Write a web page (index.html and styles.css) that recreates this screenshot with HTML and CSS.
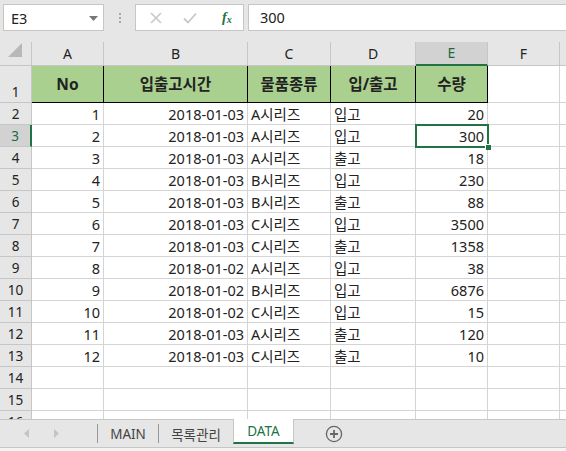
FILE: index.html
```html
<!DOCTYPE html>
<html lang="ko">
<head>
  <meta charset="UTF-8" />
  <title>DATA - Excel</title>
  <link rel="stylesheet" href="styles.css">
</head>
<body>
<div class="app">
  <div class="toolbar">
    <div class="namebox">
      <span>E3</span>
      <svg class="caret" width="9" height="5" viewBox="0 0 9 5"><path d="M0 0h9L4.5 5z" fill="#777"/></svg>
    </div>
    <div class="grip"><i></i><i></i><i></i></div>
    <div class="fxbox">
      <svg width="14" height="14" viewBox="0 0 14 14"><path d="M2 2l10 10M12 2L2 12" stroke="#c8c8c8" stroke-width="1.6"/></svg>
      <svg width="16" height="14" viewBox="0 0 16 14"><path d="M2 7.5l4 4 8-9" stroke="#c8c8c8" stroke-width="1.8" fill="none"/></svg>
      <span class="fx">f<sub>x</sub></span>
    </div>
    <div class="formula">300</div>
  </div>

  <div class="sheet">
    <table class="grid">
      <colgroup>
        <col class="c-rh"><col class="c-a"><col class="c-b"><col class="c-c"><col class="c-d"><col class="c-e"><col class="c-f"><col class="c-g">
      </colgroup>
      <tr class="colhead">
        <th class="corner"><svg width="16" height="16" viewBox="0 0 16 16"><path d="M15 1V15H1z" fill="#b8b8b8"/></svg></th>
        <th>A</th><th>B</th><th>C</th><th>D</th><th class="cur">E</th><th>F</th><th></th>
      </tr>
      <tr class="r1">
        <th>1</th>
        <td class="hd">No</td><td class="hd">입출고시간</td><td class="hd">물품종류</td><td class="hd">입/출고</td><td class="hd">수량</td><td></td><td></td>
      </tr>
      <tr><th>2</th><td class="n">1</td><td class="n">2018-01-03</td><td>A시리즈</td><td>입고</td><td class="n">20</td><td></td><td></td></tr>
      <tr><th class="cur">3</th><td class="n">2</td><td class="n">2018-01-03</td><td>A시리즈</td><td>입고</td><td class="n sel">300</td><td></td><td></td></tr>
      <tr><th>4</th><td class="n">3</td><td class="n">2018-01-03</td><td>A시리즈</td><td>출고</td><td class="n">18</td><td></td><td></td></tr>
      <tr><th>5</th><td class="n">4</td><td class="n">2018-01-03</td><td>B시리즈</td><td>입고</td><td class="n">230</td><td></td><td></td></tr>
      <tr><th>6</th><td class="n">5</td><td class="n">2018-01-03</td><td>B시리즈</td><td>출고</td><td class="n">88</td><td></td><td></td></tr>
      <tr><th>7</th><td class="n">6</td><td class="n">2018-01-03</td><td>C시리즈</td><td>입고</td><td class="n">3500</td><td></td><td></td></tr>
      <tr><th>8</th><td class="n">7</td><td class="n">2018-01-03</td><td>C시리즈</td><td>출고</td><td class="n">1358</td><td></td><td></td></tr>
      <tr><th>9</th><td class="n">8</td><td class="n">2018-01-02</td><td>A시리즈</td><td>입고</td><td class="n">38</td><td></td><td></td></tr>
      <tr><th>10</th><td class="n">9</td><td class="n">2018-01-02</td><td>B시리즈</td><td>입고</td><td class="n">6876</td><td></td><td></td></tr>
      <tr><th>11</th><td class="n">10</td><td class="n">2018-01-02</td><td>C시리즈</td><td>입고</td><td class="n">15</td><td></td><td></td></tr>
      <tr><th>12</th><td class="n">11</td><td class="n">2018-01-03</td><td>A시리즈</td><td>출고</td><td class="n">120</td><td></td><td></td></tr>
      <tr><th>13</th><td class="n">12</td><td class="n">2018-01-03</td><td>C시리즈</td><td>출고</td><td class="n">10</td><td></td><td></td></tr>
      <tr><th>14</th><td></td><td></td><td></td><td></td><td></td><td></td><td></td></tr>
      <tr><th>15</th><td></td><td></td><td></td><td></td><td></td><td></td><td></td></tr>
      <tr><th>16</th><td></td><td></td><td></td><td></td><td></td><td></td><td></td></tr>
    </table>
  </div>

  <div class="tabs">
    <div class="nav">
      <svg width="6" height="9" viewBox="0 0 6 9"><path d="M5 0v9L0 4.5z" fill="#c4c4c4"/></svg>
      <svg width="6" height="9" viewBox="0 0 6 9"><path d="M1 0v9l5-4.5z" fill="#c4c4c4"/></svg>
    </div>
    <div class="tab">MAIN</div>
    <div class="tab">목록관리</div>
    <div class="tab active">DATA</div>
    <div class="add">
      <svg width="18" height="18" viewBox="0 0 18 18"><circle cx="9" cy="9" r="7.6" fill="none" stroke="#666" stroke-width="1.3"/><path d="M9 5v8M5 9h8" stroke="#666" stroke-width="1.8"/></svg>
    </div>
  </div>
  <div class="status"></div>
</div>
</body>
</html>
```

FILE: styles.css
```css
body { margin: 0; background: #e6e6e6; font-family: "Noto Sans", "Noto Sans CJK KR", sans-serif; color: #222; }
.app { width: 566px; height: 451px; overflow: hidden; display: flex; flex-direction: column; }

/* formula bar */
.toolbar { height: 42px; box-sizing: border-box; padding-top: 4px; display: flex; align-items: flex-start; background: #e6e6e6; }
.namebox { width: 101px; height: 27px; box-sizing: border-box; margin-left: 3px; background: #fff; border: 1px solid #c6c6c6; display: flex; align-items: center; justify-content: space-between; padding: 0 5px 0 7px; font-size: 14.5px; }
.namebox .caret { margin-top: 1px; }
.grip { width: 31px; height: 27px; display: flex; flex-direction: column; align-items: center; justify-content: center; gap: 2px; }
.grip i { width: 2px; height: 2px; background: #a8a8a8; }
.fxbox { width: 109px; height: 27px; box-sizing: border-box; background: #fff; border: 1px solid #c6c6c6; display: flex; align-items: center; padding-left: 13px; gap: 19px; }
.fxbox .fx { font-family: "Liberation Serif", serif; font-style: italic; font-weight: bold; color: #217346; font-size: 14px; margin-left: 5px; }
.fxbox .fx sub { font-size: 10px; vertical-align: -1px; }
.formula { flex: 1; height: 27px; box-sizing: border-box; margin-left: 4px; background: #fff; border: 1px solid #c6c6c6; border-right: none; padding-left: 11px; font-size: 14.5px; line-height: 25px; }

/* grid */
.sheet { height: 377px; overflow: hidden; background: #fff; }
.grid { table-layout: fixed; width: 632px; border-collapse: separate; border-spacing: 0; font-size: 14.5px; }
.c-rh { width: 32px; }
.c-a { width: 72px; }
.c-b { width: 144px; }
.c-c { width: 83px; }
.c-d { width: 85px; }
.c-e { width: 72px; }
.c-f { width: 72px; }
.c-g { width: 72px; }
.grid td, .grid th { padding: 0 3px; border-right: 1px solid #d4d4d4; border-bottom: 1px solid #d4d4d4; white-space: nowrap; overflow: hidden; box-sizing: border-box; }
.grid tr { height: 22px; }
.grid td { vertical-align: bottom; line-height: 20px; }
.grid td.n { text-align: right; }
.grid th { background: #e6e6e6; font-weight: normal; color: #222; border-color: #c6c6c6; }
.colhead { height: 21px !important; }
.colhead th { text-align: center; font-size: 14px; line-height: 20px; }
.colhead th.corner { padding: 0; text-align: right; vertical-align: bottom; line-height: 0; }
.colhead th.corner svg { margin: 0 2px 2px 0; }
.grid tr > th:first-child { text-align: center; font-size: 13.5px; vertical-align: bottom; line-height: 20px; padding: 0; }
.grid th.cur { background: #d2d2d2; color: #1e6b40; }
.colhead th.cur { border-bottom: 2px solid #217346; }
.grid tr > th.cur:first-child { border-right: 2px solid #217346; }

.r1 { height: 37px !important; }
.r1 th { line-height: 22px; }
.r1 td.hd { background: #a9d08e; border-right: 1px solid #000; border-bottom: 1px solid #000; text-align: center; vertical-align: middle; font-weight: bold; font-size: 15.5px; }
.r1 td:last-child, .r1 td:nth-last-child(2) { vertical-align: middle; }

.grid td.sel { position: relative; outline: 2px solid #217346; outline-offset: -1px; overflow: visible; }
.grid td.sel::after { content: ""; position: absolute; right: -4px; bottom: -4px; width: 5px; height: 5px; background: #217346; border: 1px solid #fff; border-right: none; border-bottom: none; z-index: 2; }

/* sheet tabs */
.tabs { height: 28px; box-sizing: border-box; border-top: 1px solid #c6c6c6; background: #e6e6e6; display: flex; align-items: stretch; }
.nav { width: 98px; display: flex; align-items: center; gap: 23px; padding-left: 24px; box-sizing: border-box; border-right: 1px solid #999; margin: 4px 0 4px; }
.tab { padding: 0 12px 0 12px; font-size: 13.5px; color: #444; display: flex; align-items: center; border-right: 1px solid #999; margin: 4px 0; }
.tab:nth-child(2) { width: 60px; justify-content: center; padding: 0; }
.tab:nth-child(3) { width: 74px; justify-content: center; padding: 0; border-right: none; }
.tab.active { width: 61px; margin: -1px 0 3px; padding: 0; justify-content: center; background: #fff; color: #217346; border: 1px solid #c6c6c6; border-top: none; border-bottom: 2px solid #217346; box-sizing: border-box; }
.add { display: flex; align-items: center; margin-left: 31px; }
.status { flex: 1; border-top: 1px solid #c6c6c6; background: #f3f3f3; }
```
